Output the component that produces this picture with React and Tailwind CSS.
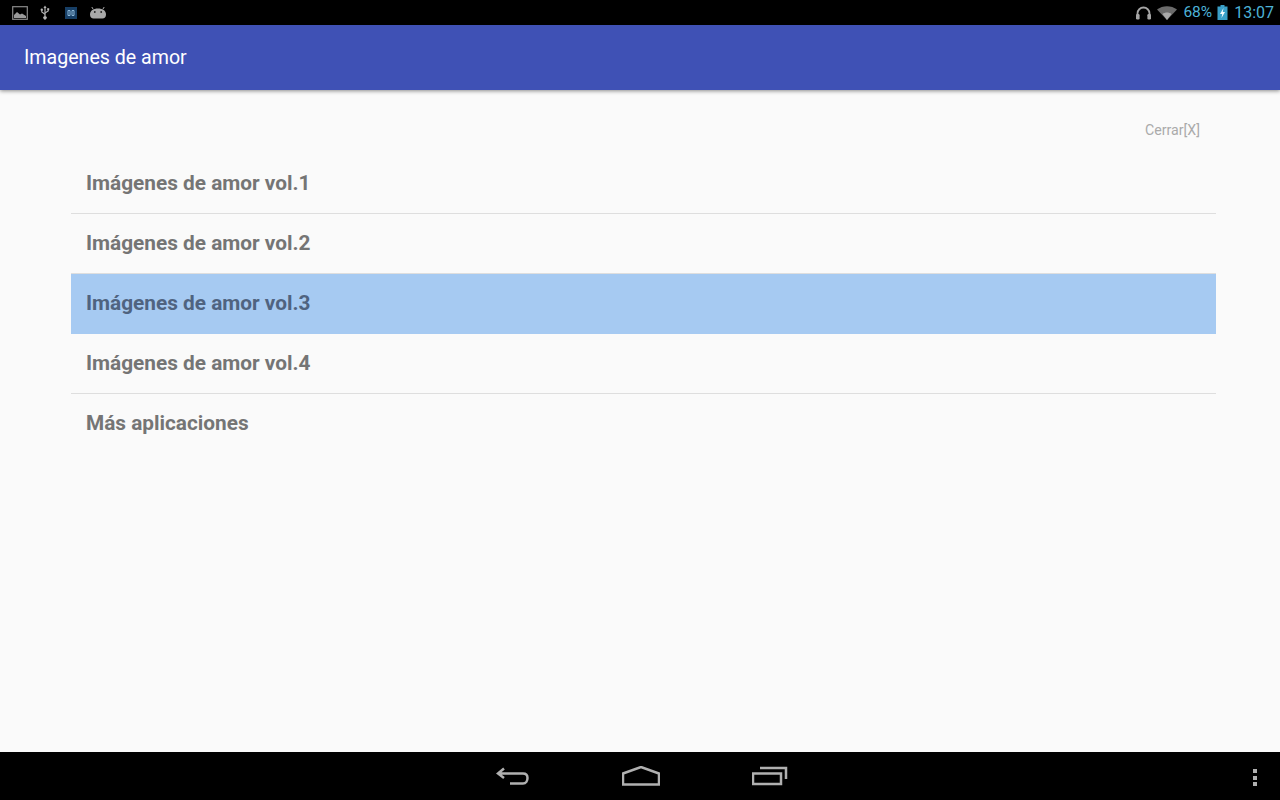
import React from 'react';

const items = [
  { label: 'Imágenes de amor vol.1' },
  { label: 'Imágenes de amor vol.2' },
  { label: 'Imágenes de amor vol.3', active: true },
  { label: 'Imágenes de amor vol.4' },
  { label: 'Más aplicaciones', last: true },
];

const LeftIcons = () => (
  <div className="flex items-center gap-[11px]">
    <svg width="16" height="14" viewBox="0 0 16 14">
      <rect x="0.7" y="0.7" width="14.6" height="12.6" fill="none" stroke="#8a8a8a" strokeWidth="1.2" />
      <path d="M2 12V9l3-3 3 2.500 2-1 4 2.500v2z" fill="#9a9a9a" />
    </svg>
    <svg width="12" height="15" viewBox="0 0 12 15">
      <path d="M6 0.500 7.600 3H6.600v8.200a1.700 1.700 0 1 1-1.200 0V3H4.400z" fill="#b5b5b5" />
      <path d="M6 9.200 2.800 7V5.600" fill="none" stroke="#b5b5b5" strokeWidth="1.100" />
      <path d="M6 8 9.200 6V4.800" fill="none" stroke="#b5b5b5" strokeWidth="1.100" />
      <circle cx="2.800" cy="4.800" r="1.200" fill="#b5b5b5" />
      <rect x="8.200" y="3.200" width="2" height="2" fill="#b5b5b5" />
    </svg>
    <svg width="12" height="12" viewBox="0 0 12 12" className="ml-[3px]">
      <rect width="12" height="12" fill="#173f66" />
      <path d="M3 3.500h2v5H3zM7 3.500h2v5H7z" fill="none" stroke="#8db8d8" strokeWidth="1" />
    </svg>
    <svg width="18" height="13" viewBox="0 0 18 13" className="ml-[1px]">
      <path d="M1 8.500C1 4.500 4.500 2.500 9 2.500s8 2 8 6c0 2.500-1.500 4-3.500 4h-9C2.500 12.500 1 11 1 8.500z" fill="#a8a8a8" />
      <path d="M4 3 2.800 1M14 3l1.200-2" stroke="#a8a8a8" strokeWidth="1" />
      <circle cx="5.800" cy="6" r="0.900" fill="#222" />
      <circle cx="12.200" cy="6" r="0.900" fill="#222" />
    </svg>
  </div>
);

const RightIcons = () => (
  <div className="flex items-center">
    <svg width="17" height="14" viewBox="0 0 17 14">
      <path d="M2.500 10V7.500a6 6 0 0 1 12 0V10" fill="none" stroke="#a5a5a5" strokeWidth="1.800" />
      <rect x="1" y="8" width="3.600" height="5.500" rx="1.200" fill="#a5a5a5" />
      <rect x="12.400" y="8" width="3.600" height="5.500" rx="1.200" fill="#a5a5a5" />
    </svg>
    <svg width="20" height="14" viewBox="0 0 20 14" className="ml-[5px]">
      <path d="M0 3.500C5.500-1 14.500-1 20 3.500L10 14z" fill="#6b6b6b" />
      <path d="M5.500 8C8 6 12 6 14.500 8L10 14z" fill="#a9a9a9" />
    </svg>
    <span className="ml-[6px] text-[15.500px] leading-[25px] text-[#4db2d6]">68%</span>
    <svg width="11" height="15" viewBox="0 0 11 15" className="ml-[5px]">
      <rect x="3.500" y="0" width="4" height="2" fill="#3aa0c8" />
      <rect x="0.500" y="1.500" width="10" height="13.500" fill="#3aa0c8" />
      <path d="M6.500 3 3 9h2.200L4.500 13 8 7H5.800z" fill="#f2fafd" />
    </svg>
    <span className="ml-[6px] mr-[6px] text-[16px] leading-[25px] text-[#4db2d6]">13:07</span>
  </div>
);

const NavBar = () => (
  <div className="relative flex h-[48px] items-center justify-center bg-black">
    <div className="ml-[3px] flex items-center">
      <svg width="34" height="20" viewBox="0 0 34 20">
        <path
          d="M8 2.500 2 7.500l6 4.500M2.500 7.500H27c3 0 4.500 2 4.500 4.500S30 17.500 27 17.500H14"
          fill="none"
          stroke="#b0b0b0"
          strokeWidth="2.500"
        />
      </svg>
      <svg width="38" height="20" viewBox="0 0 38 20" className="ml-[92px]">
        <path d="M1 7.500 19 1l18 6.500v11H1z" fill="none" stroke="#b0b0b0" strokeWidth="2.500" />
      </svg>
      <svg width="36" height="20" viewBox="0 0 36 20" className="ml-[92px]">
        <rect x="1" y="7.500" width="28" height="10.500" fill="none" stroke="#b0b0b0" strokeWidth="2.500" />
        <path d="M8 2h26v11" fill="none" stroke="#b0b0b0" strokeWidth="2.500" />
      </svg>
    </div>
    <div className="absolute right-[23px] top-[17px] flex flex-col gap-[2.500px]">
      <span className="h-[4px] w-[4px] bg-[#b0b0b0]" />
      <span className="h-[4px] w-[4px] bg-[#b0b0b0]" />
      <span className="h-[4px] w-[4px] bg-[#b0b0b0]" />
    </div>
  </div>
);

export default function App() {
  return (
    <div className="flex h-[800px] w-[1280px] flex-col overflow-hidden bg-[#fafafa] font-['Roboto',sans-serif]">
      <div className="flex h-[25px] items-center justify-between bg-black pl-[12px]">
        <LeftIcons />
        <RightIcons />
      </div>

      <header className="relative flex h-[65px] items-center bg-[#3f51b5] pl-[24px] shadow-[0_1px_4px_rgba(0,0,0,0.45)]">
        <h1 className="text-[19.600px] font-normal text-white">Imagenes de amor</h1>
      </header>

      <main className="flex-1 pl-[71px] pr-[64px]">
        <div className="flex h-[64px] items-start justify-end pr-[16px] pt-[32px]">
          <span className="text-[14.200px] leading-[16px] text-[#aaaaaa]">Cerrar[X]</span>
        </div>
        <ul>
          {items.map((item) => (
            <li
              key={item.label}
              className={`flex h-[60px] items-center pl-[15px] text-[20.800px] font-bold ${
                item.active ? 'bg-[#a6caf2] text-[#4f6380]' : 'text-[#757575]'
              } ${item.last || item.active ? '' : 'border-b border-[#dedede]'}`}
            >
              {item.label}
            </li>
          ))}
        </ul>
      </main>

      <NavBar />
    </div>
  );
}
